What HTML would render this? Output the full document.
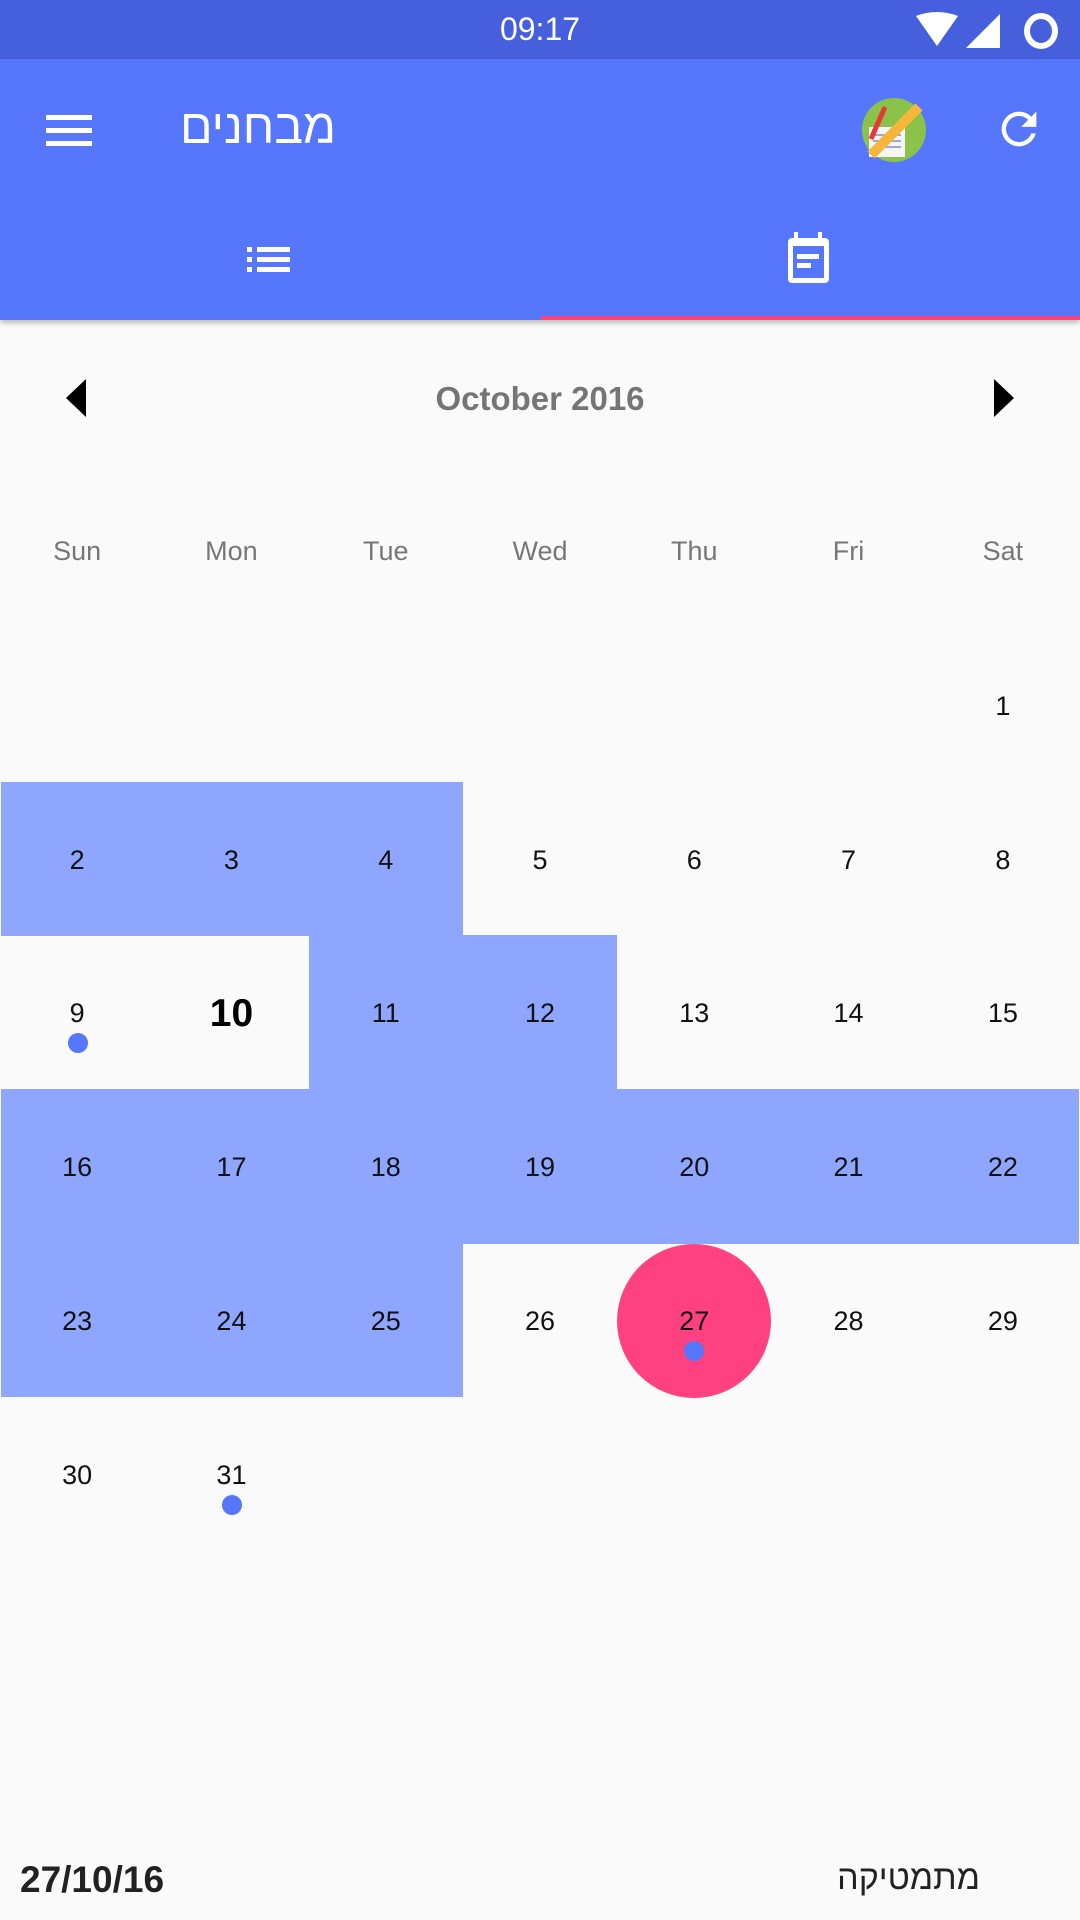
<!DOCTYPE html>
<html><head><meta charset="utf-8"><style>
*{margin:0;padding:0;box-sizing:border-box}
body{width:1080px;height:1920px;background:#fafafa;position:relative;overflow:hidden;font-family:"Liberation Sans","Noto Sans CJK JP",sans-serif}
.abs{position:absolute}
.status{left:0;top:0;width:1080px;height:59px;background:#455fdd}
.bar{left:0;top:59px;width:1080px;height:261px;background:#5677fc;box-shadow:0 3px 5px rgba(0,0,0,.25)}
.hl{position:absolute;background:#8fa6ff}
.c{position:absolute;width:154.3px;height:154px;display:flex;align-items:center;justify-content:center;font-size:27px;color:#111;padding-top:3px}
.dot{position:absolute;width:20px;height:20px;border-radius:50%;background:#5677fc}
.dn{position:absolute;top:536px;width:154.3px;text-align:center;font-size:27px;color:#777}
</style></head><body>
<div class="abs status"></div>
<div class="abs" style="left:0;top:11px;width:1080px;text-align:center;color:#fff;font-size:32px">09:17</div>
<svg class="abs" style="left:912px;top:12px" width="150" height="38" viewBox="0 0 150 38">
<path d="M4 4 Q25 -4 46 4 L25 34 Z" fill="#fff"/>
<path d="M54 36 L88 36 L88 2 Z" fill="#fff"/>
<ellipse cx="129" cy="19" rx="14" ry="15" fill="none" stroke="#fff" stroke-width="6"/>
</svg>
<div class="abs bar"></div>
<div class="abs" style="left:541px;top:316px;width:539px;height:4px;background:#ff4081"></div>
<svg class="abs" style="left:46px;top:115px" width="48" height="32"><rect y="0" width="46" height="5" fill="#fff"/><rect y="13" width="46" height="5" fill="#fff"/><rect y="26" width="46" height="5" fill="#fff"/></svg>
<div class="abs" style="left:180px;top:101px;color:#fff;font-size:48px;line-height:54px;direction:rtl">מבחנים</div>
<svg class="abs" style="left:861px;top:97px" width="66" height="66" viewBox="0 0 66 66">
<circle cx="33" cy="33" r="32" fill="#8bc34a"/>
<rect x="8" y="30" width="36" height="30" fill="#f5f5f5"/>
<g stroke="#9fa8da" stroke-width="2"><line x1="12" y1="38" x2="40" y2="38"/><line x1="12" y1="44" x2="40" y2="44"/><line x1="12" y1="50" x2="40" y2="50"/></g>
<line x1="10" y1="58" x2="58" y2="10" stroke="#f4b63b" stroke-width="10"/>
<line x1="10" y1="42" x2="24" y2="10" stroke="#e53935" stroke-width="5"/>
</svg>
<svg class="abs" style="left:993px;top:103px" width="52" height="52" viewBox="0 0 24 24"><path fill="#fff" d="M17.65 6.35A7.96 7.96 0 0 0 12 4a8 8 0 1 0 7.73 10h-2.08A6 6 0 1 1 12 6c1.66 0 3.14.69 4.22 1.78L13 11h7V4l-2.35 2.35z"/></svg>
<svg class="abs" style="left:245px;top:245px" width="48" height="30"><g fill="#fff"><rect x="2" y="2" width="5" height="5"/><rect x="2" y="12" width="5" height="5"/><rect x="2" y="22" width="5" height="5"/><rect x="12" y="2" width="33" height="5"/><rect x="12" y="12" width="33" height="5"/><rect x="12" y="22" width="33" height="5"/></g></svg>
<svg class="abs" style="left:785px;top:230px" width="50" height="56" viewBox="0 0 50 56"><g fill="#fff"><rect x="9" y="2" width="4" height="8"/><rect x="33" y="2" width="4" height="8"/></g><rect x="3" y="8" width="41" height="45" rx="4" fill="#fff"/><rect x="8" y="16" width="31" height="32" fill="#5677fc"/><rect x="12" y="24" width="22" height="5" fill="#fff"/><rect x="12" y="33" width="14" height="5" fill="#fff"/></svg>
<svg class="abs" style="left:64px;top:378px" width="24" height="40"><path d="M22 1 L22 39 L2 20 Z" fill="#000"/></svg>
<svg class="abs" style="left:992px;top:378px" width="24" height="40"><path d="M2 1 L2 39 L22 20 Z" fill="#000"/></svg>
<div class="abs" style="left:0;top:380px;width:1080px;text-align:center;font-size:33px;font-weight:bold;color:#757575">October 2016</div>
<div class="dn" style="left:0">Sun</div><div class="dn" style="left:154.3px">Mon</div><div class="dn" style="left:308.6px">Tue</div><div class="dn" style="left:462.9px">Wed</div><div class="dn" style="left:617.1px">Thu</div><div class="dn" style="left:771.4px">Fri</div><div class="dn" style="left:925.7px">Sat</div>
<div class="hl" style="left:1px;top:782px;width:462px;height:154px"></div>
<div class="hl" style="left:309px;top:935px;width:308px;height:155px"></div>
<div class="hl" style="left:1px;top:1089px;width:1078px;height:155px"></div>
<div class="hl" style="left:1px;top:1243px;width:462px;height:154px"></div>
<div class="abs" style="left:617px;top:1244px;width:154px;height:154px;border-radius:50%;background:#ff4081"></div>
<div class="c" style="left:925.7px;top:628px">1</div>
<div class="c" style="left:0;top:782px">2</div><div class="c" style="left:154.3px;top:782px">3</div><div class="c" style="left:308.6px;top:782px">4</div><div class="c" style="left:462.9px;top:782px">5</div><div class="c" style="left:617.1px;top:782px">6</div><div class="c" style="left:771.4px;top:782px">7</div><div class="c" style="left:925.7px;top:782px">8</div>
<div class="c" style="left:0;top:935px">9</div><div class="c" style="left:154.3px;top:935px;font-weight:bold;font-size:39px;color:#000">10</div><div class="c" style="left:308.6px;top:935px">11</div><div class="c" style="left:462.9px;top:935px">12</div><div class="c" style="left:617.1px;top:935px">13</div><div class="c" style="left:771.4px;top:935px">14</div><div class="c" style="left:925.7px;top:935px">15</div>
<div class="c" style="left:0;top:1089px">16</div><div class="c" style="left:154.3px;top:1089px">17</div><div class="c" style="left:308.6px;top:1089px">18</div><div class="c" style="left:462.9px;top:1089px">19</div><div class="c" style="left:617.1px;top:1089px">20</div><div class="c" style="left:771.4px;top:1089px">21</div><div class="c" style="left:925.7px;top:1089px">22</div>
<div class="c" style="left:0;top:1243px">23</div><div class="c" style="left:154.3px;top:1243px">24</div><div class="c" style="left:308.6px;top:1243px">25</div><div class="c" style="left:462.9px;top:1243px">26</div><div class="c" style="left:617.1px;top:1243px">27</div><div class="c" style="left:771.4px;top:1243px">28</div><div class="c" style="left:925.7px;top:1243px">29</div>
<div class="c" style="left:0;top:1397px">30</div><div class="c" style="left:154.3px;top:1397px">31</div>
<div class="dot" style="left:68px;top:1033px"></div>
<div class="dot" style="left:684px;top:1341px"></div>
<div class="dot" style="left:222px;top:1495px"></div>
<div class="abs" style="left:20px;top:1859px;font-size:37px;font-weight:bold;color:#222">27/10/16</div>
<div class="abs" style="left:760px;top:1859px;width:220px;text-align:right;font-size:34px;color:#222;direction:rtl">מתמטיקה</div>
</body></html>
